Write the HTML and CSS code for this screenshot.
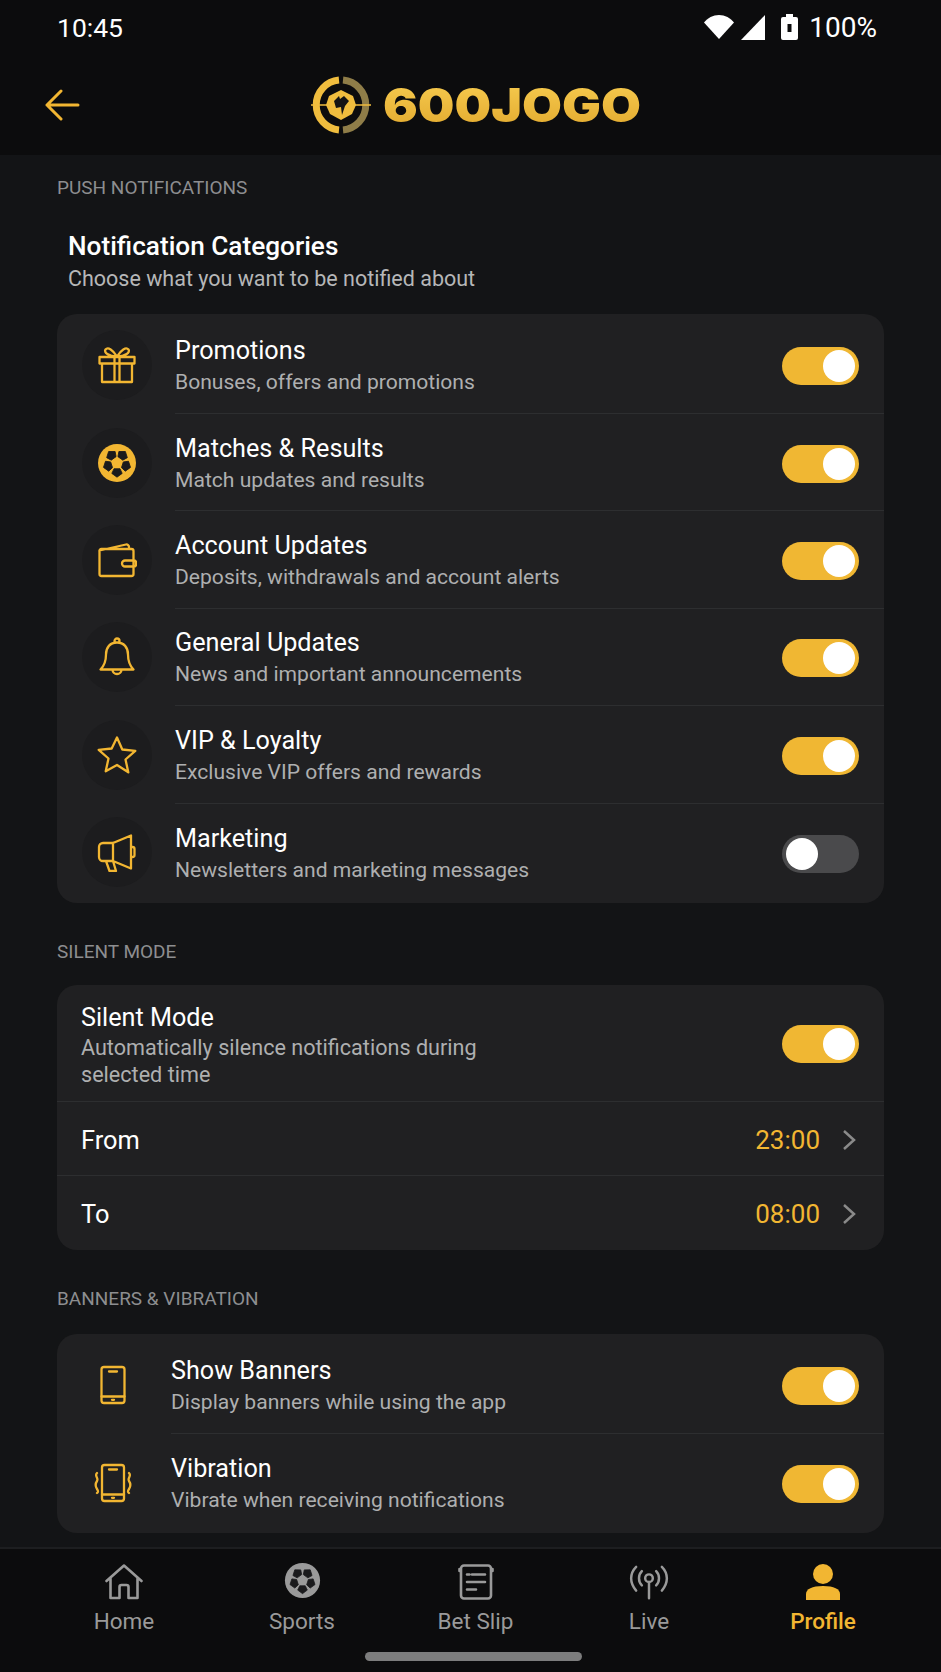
FILE: index.html

```html
<!DOCTYPE html>
<html lang="en">
<head>
  <meta charset="UTF-8">
  <title>Notification Settings</title>
  <link rel="stylesheet" href="styles.css">
</head>
<body>
  <svg class="sprite" width="0" height="0">
    <symbol id="ball" viewBox="0 0 40 40">
      <circle cx="20" cy="20" r="19" fill="currentColor"/>
      <g fill="#1a1a1c" stroke="#1a1a1c" stroke-width="0.800" stroke-linejoin="round">
        <path d="M17 14.300h6l2.200-4.700L20 5.800l-5.200 3.800z" transform="rotate(36 20 20)"/>
        <path d="M17 14.300h6l2.200-4.700L20 5.800l-5.200 3.800z" transform="rotate(108 20 20)"/>
        <path d="M17 14.300h6l2.200-4.700L20 5.800l-5.200 3.800z" transform="rotate(180 20 20)"/>
        <path d="M17 14.300h6l2.200-4.700L20 5.800l-5.200 3.800z" transform="rotate(252 20 20)"/>
        <path d="M17 14.300h6l2.200-4.700L20 5.800l-5.200 3.800z" transform="rotate(324 20 20)"/>
      </g>
    </symbol>
  </svg>

  <div class="app">
    <header class="top">
      <div class="status">
        <span class="clock">10:45</span>
        <div class="status-right">
          <svg class="wifi" width="30" height="24" viewBox="0 0 30 24"><path d="M15 24 0 7.500C3.500 3 9 0 15 0s11.500 3 15 7.500z" fill="#fff"/></svg>
          <svg class="signal" width="24" height="25" viewBox="0 0 24 25"><path d="M24 0v25H0z" fill="#fff"/></svg>
          <svg class="battery" width="17" height="26" viewBox="0 0 17 26"><path fill-rule="evenodd" d="M5 0h7v3h3a2 2 0 0 1 2 2v19a2 2 0 0 1-2 2H2a2 2 0 0 1-2-2V5a2 2 0 0 1 2-2h3zM6.500 10v8h4v-8z" fill="#fff"/></svg>
          <span class="percent">100%</span>
        </div>
      </div>
      <div class="bar">
        <svg class="back" width="36" height="32" viewBox="0 0 36 32" fill="none" stroke="#f2b632" stroke-width="3" stroke-linecap="round" stroke-linejoin="round"><path d="M34 16H3M17 2 3 16l14 14"/></svg>
        <div class="logo">
          <svg width="60" height="60" viewBox="0 0 60 60" fill="none">
            <path d="M28 5.100A25 25 0 0 0 28 54.900" stroke="#f0bd3e" stroke-width="7"/>
            <path d="M32 5.100A25 25 0 0 1 32 54.900" stroke="#8f7d48" stroke-width="7"/>
            <path d="M0 30h60" stroke="#f0bd3e" stroke-width="1.500"/>
            <path d="M30 15l12 6 3 9-4 9-11 6-11-6-4-9 3-9z" fill="#f0bd3e"/>
            <path d="M23 26l5-5 1 3 4-3 5 5-4 5-3 9-1-8-5 1z" fill="#141414"/>
          </svg>
          <span class="logo-text">600JOGO</span>
        </div>
      </div>
    </header>

    <main class="content">
      <h2 class="section-label first">PUSH NOTIFICATIONS</h2>
      <div class="intro">
        <h1>Notification Categories</h1>
        <p>Choose what you want to be notified about</p>
      </div>

      <section class="card">
        <div class="row">
          <div class="icon-circle">
            <svg class="icon" viewBox="0 0 40 40"><path d="M2.500 12h35v6.500h-35zM5 18.500V37h30V18.500M17.500 12v25M22.500 12v25M20 11.500C16 5 11 1.500 8.500 4.500c-2 2.800 3 7 11.500 7zM20 11.500C24 5 29 1.500 31.500 4.500c2 2.800-3 7-11.500 7z"/></svg>
          </div>
          <div class="row-body">
            <div class="row-text"><h3>Promotions</h3><p>Bonuses, offers and promotions</p></div>
            <span class="toggle on"></span>
          </div>
        </div>
        <div class="row">
          <div class="icon-circle">
            <svg class="icon-ball gold" width="40" height="40"><use href="#ball"/></svg>
          </div>
          <div class="row-body">
            <div class="row-text"><h3>Matches &amp; Results</h3><p>Match updates and results</p></div>
            <span class="toggle on"></span>
          </div>
        </div>
        <div class="row">
          <div class="icon-circle">
            <svg class="icon" viewBox="0 0 40 40"><path d="M2.500 11.500V34a2 2 0 0 0 2 2h30a2 2 0 0 0 2-2V11a2 2 0 0 0-2-2H4.500a2 2 0 0 0-2 2.500zm0-1L29 4.500a2.500 2.500 0 0 1 3 2.500v2M37 20.500H28a3 3 0 0 0 0 6h9a2 2 0 0 0 2-2v-2a2 2 0 0 0-2-2z"/></svg>
          </div>
          <div class="row-body">
            <div class="row-text"><h3>Account Updates</h3><p>Deposits, withdrawals and account alerts</p></div>
            <span class="toggle on"></span>
          </div>
        </div>
        <div class="row">
          <div class="icon-circle">
            <svg class="icon" viewBox="0 0 40 40"><path d="M20 5.500c-7 0-11 5-11 12 0 8-2 11.500-5.500 15h33C33 29 31 25.500 31 17.500c0-7-4-12-11-12zM17.500 5.800V4a2.500 2.500 0 0 1 5 0v1.800M15.500 32.500a4.500 4.500 0 0 0 9 0"/></svg>
          </div>
          <div class="row-body">
            <div class="row-text"><h3>General Updates</h3><p>News and important announcements</p></div>
            <span class="toggle on"></span>
          </div>
        </div>
        <div class="row">
          <div class="icon-circle">
            <svg class="icon" viewBox="0 0 40 40"><path d="M20 2.500l5.300 12 13 1.300-9.800 8.700 2.800 12.800L20 30l-11.300 6.300 2.800-12.800-9.800-8.700 13-1.300z"/></svg>
          </div>
          <div class="row-body">
            <div class="row-text"><h3>VIP &amp; Loyalty</h3><p>Exclusive VIP offers and rewards</p></div>
            <span class="toggle on"></span>
          </div>
        </div>
        <div class="row">
          <div class="icon-circle">
            <svg class="icon" viewBox="0 0 40 40"><path d="M34 3.500v33L16 29H6a4 4 0 0 1-4-4V15a4 4 0 0 1 4-4h10zM16 11v18M34 15h1.500a2 2 0 0 1 2 2v6a2 2 0 0 1-2 2H34M9 29l3.500 10h6.500L16 29"/></svg>
          </div>
          <div class="row-body">
            <div class="row-text"><h3>Marketing</h3><p>Newsletters and marketing messages</p></div>
            <span class="toggle"></span>
          </div>
        </div>
      </section>

      <h2 class="section-label">SILENT MODE</h2>
      <section class="card silent">
        <div class="row-body silent-main">
          <div class="row-text"><h3>Silent Mode</h3><p>Automatically silence notifications during<br>selected time</p></div>
          <span class="toggle on"></span>
        </div>
        <div class="row-body time-row">
          <span class="time-label">From</span>
          <span class="time-value">23:00</span>
          <svg class="chevron" width="14" height="20" viewBox="0 0 14 20" fill="none" stroke="#8a8a8a" stroke-width="2.500"><path d="M2 1l10 9-10 9"/></svg>
        </div>
        <div class="row-body time-row">
          <span class="time-label">To</span>
          <span class="time-value">08:00</span>
          <svg class="chevron" width="14" height="20" viewBox="0 0 14 20" fill="none" stroke="#8a8a8a" stroke-width="2.500"><path d="M2 1l10 9-10 9"/></svg>
        </div>
      </section>

      <h2 class="section-label last">BANNERS &amp; VIBRATION</h2>
      <section class="card banners">
        <div class="row">
          <div class="icon-plain">
            <svg class="icon" viewBox="0 0 40 40"><rect x="8.500" y="2" width="23" height="36" rx="2.500"/><path d="M8.500 31.500h23M16 6.500h8M19 34.800h2"/></svg>
          </div>
          <div class="row-body">
            <div class="row-text"><h3>Show Banners</h3><p>Display banners while using the app</p></div>
            <span class="toggle on"></span>
          </div>
        </div>
        <div class="row">
          <div class="icon-plain">
            <svg class="icon" viewBox="0 0 40 40"><rect x="9" y="2" width="22" height="36" rx="2.500"/><path d="M9 31.500h22M16 6.500h8M19 34.800h2M4 10c-3 3 2 5 0 8s-2 5 0 8 1 3 0 4M36 10c3 3-2 5 0 8s2 5 0 8-1 3 0 4"/></svg>
          </div>
          <div class="row-body">
            <div class="row-text"><h3>Vibration</h3><p>Vibrate when receiving notifications</p></div>
            <span class="toggle on"></span>
          </div>
        </div>
      </section>
    </main>

    <nav class="tabs">
      <a class="tab">
        <svg class="tab-icon" viewBox="0 0 38 36"><path d="M1.500 17 19 1.500 36.500 17M5.500 14v20h9V23a2 2 0 0 1 2-2h5a2 2 0 0 1 2 2v11h9V14"/></svg>
        <span>Home</span>
      </a>
      <a class="tab">
        <svg class="tab-ball" width="37" height="37"><use href="#ball"/></svg>
        <span>Sports</span>
      </a>
      <a class="tab">
        <svg class="tab-icon" viewBox="0 0 38 36"><rect x="4" y="1.500" width="30" height="33" rx="3"/><path d="M2.500 7v-2M35.500 7v-2M10 10.500h2.500M15 10.500h13M10 18h18M10 25.500h9"/></svg>
        <span>Bet Slip</span>
      </a>
      <a class="tab">
        <svg class="tab-icon" viewBox="0 0 42 36"><circle cx="21" cy="14" r="4"/><path d="M21 18v17M13.500 6.500c-4 4-4 11 0 15M28.500 6.500c4 4 4 11 0 15M7.500 2c-7 7-7 17 0 25M34.500 2c7 7 7 17 0 25"/></svg>
        <span>Live</span>
      </a>
      <a class="tab active">
        <svg class="tab-fill" width="34" height="36" viewBox="0 0 34 36"><circle cx="17" cy="10" r="10"/><path d="M0 36v-6c0-5 6-8 17-8s17 3 17 8v6z"/></svg>
        <span>Profile</span>
      </a>
      <div class="home-pill"></div>
    </nav>
  </div>
</body>
</html>
```

FILE: styles.css

```css
* {
  box-sizing: border-box;
}
body {
  margin: 0;
  background: #131416;
  color: #fff;
  font-family: Roboto, "Liberation Sans", sans-serif;
}
h1, h2, h3, p {
  margin: 0;
  font-weight: 400;
}
.sprite {
  position: absolute;
}
.app {
  display: flex;
  flex-direction: column;
  height: 1672px;
  overflow: hidden;
}

/* top */
.top {
  height: 155px;
  background: #0c0c0d;
}
.status {
  display: flex;
  justify-content: space-between;
  align-items: center;
  height: 54px;
  padding: 0 64px 0 57px;
  font-size: 26.500px;
}
.status-right {
  display: flex;
  align-items: center;
}
.signal {
  margin-left: 7px;
}
.battery {
  margin-left: 16px;
}
.percent {
  margin-left: 11px;
  font-size: 28px;
}
.bar {
  position: relative;
  display: flex;
  height: 101px;
  padding-left: 311px;
}
.back {
  position: absolute;
  left: 44px;
  top: 35px;
}
.logo {
  display: flex;
  align-items: center;
  gap: 12px;
  height: 102px;
}
.logo-text {
  font-family: Inter, sans-serif;
  font-weight: 900;
  font-size: 46.500px;
  line-height: 1;
  transform: scaleX(1.110);
  transform-origin: left center;
  background: linear-gradient(#f6ca4e, #e3ab30);
  -webkit-background-clip: text;
  background-clip: text;
  color: transparent;
}

/* content */
.content {
  flex: 1;
  padding: 0 57px;
}
.section-label {
  font-size: 19px;
  line-height: 24px;
  color: #8d8e90;
  margin: 37px 0 21px;
}
.section-label.first {
  margin: 21px 0 0;
}
.section-label.last {
  margin-bottom: 23px;
}
.intro {
  padding: 30px 11px 0;
  height: 114px;
}
.intro h1 {
  font-size: 26.200px;
  font-weight: 500;
  line-height: 32px;
}
.intro p {
  font-size: 21.500px;
  line-height: 33px;
  color: #b6b7b8;
}
.card {
  background: #202022;
  border-radius: 20px;
  padding: 2px 0;
  overflow: hidden;
}
.row {
  display: flex;
  align-items: center;
  height: 97.400px;
  padding-left: 25px;
}
.row:first-child {
  height: 98px;
}
.icon-circle {
  display: flex;
  align-items: center;
  justify-content: center;
  width: 70px;
  height: 70px;
  margin-right: 23px;
  border-radius: 50%;
  background: #1c1c1e;
  flex-shrink: 0;
}
.icon-plain {
  display: flex;
  justify-content: center;
  width: 65px;
  margin-left: -2px;
  margin-right: 26px;
  flex-shrink: 0;
}
.icon {
  width: 40px;
  height: 40px;
  fill: none;
  stroke: #f2b632;
  stroke-width: 2.300;
  stroke-linejoin: round;
  stroke-linecap: round;
}
.gold {
  color: #f2b632;
}
.row-body {
  display: flex;
  align-items: center;
  justify-content: space-between;
  flex: 1;
  height: 100%;
  padding-top: 3px;
  padding-right: 25px;
  border-bottom: 1px solid #2d2e30;
}
.row:last-child .row-body {
  border-bottom: 0;
}
.row-text h3 {
  font-size: 25.200px;
  line-height: 32px;
}
.row-text p {
  font-size: 21.100px;
  line-height: 30px;
  color: #aeafb0;
}

/* toggle */
.toggle {
  position: relative;
  width: 77px;
  height: 38px;
  border-radius: 19px;
  background: #4a4a4c;
  flex-shrink: 0;
}
.toggle::after {
  content: "";
  position: absolute;
  top: 3px;
  left: 4px;
  width: 32px;
  height: 32px;
  border-radius: 50%;
  background: #fff;
}
.toggle.on {
  background: #f0b733;
}
.toggle.on::after {
  left: 41px;
}

/* silent mode */
.silent {
  padding: 0;
}
.silent .row-body {
  padding-left: 24px;
}
.silent-main {
  height: 117px;
}
.silent-main .row-text {
  padding-top: 2px;
}
.silent-main .row-text p {
  font-size: 21.600px;
  line-height: 27px;
}
.time-row {
  height: 74px;
  justify-content: flex-start;
  border-bottom: 1px solid #2d2e30;
}
.time-row:last-child {
  border-bottom: 0;
}
.time-label {
  flex: 1;
  font-size: 25.400px;
}
.time-value {
  font-size: 26px;
  color: #f2b632;
}
.chevron {
  margin-left: 22px;
  margin-right: 3px;
}

/* bottom tabs */
.tabs {
  position: relative;
  display: grid;
  grid-template-columns: 182px 174px 173px 174px 174px;
  height: 125px;
  padding: 15px 0 0 33px;
  background: #0c0c0d;
  border-top: 2px solid #1d1e20;
}
.tab {
  display: flex;
  flex-direction: column;
  align-items: center;
  color: #9a9a9a;
  font-size: 22.500px;
}
.tab span {
  line-height: 28px;
  margin-top: 7px;
}
.tab-icon {
  width: 40px;
  height: 36px;
  fill: none;
  stroke: #9a9a9a;
  stroke-width: 2.600;
  stroke-linejoin: round;
  stroke-linecap: round;
}
.tab-fill {
  fill: #f2b632;
}
.tab-ball {
  margin-top: -2px;
  margin-bottom: 1px;
  color: #9a9a9a;
}
.tab.active {
  color: #f2b632;
  font-weight: 500;
}
.home-pill {
  position: absolute;
  left: 365px;
  top: 103px;
  width: 217px;
  height: 9px;
  border-radius: 5px;
  background: #7d7d7d;
}
```
